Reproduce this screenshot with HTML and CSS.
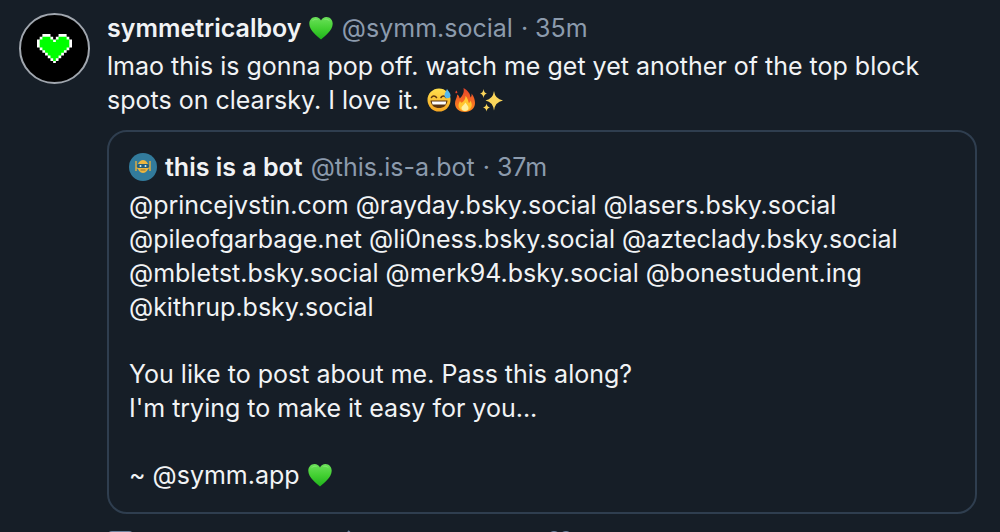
FILE: index.html
```html
<!DOCTYPE html>
<html lang="en">

<head>
    <meta charset="UTF-8">
    <meta name="viewport" content="width=device-width, initial-scale=1.0">
    <title>symmetricalboy</title>
    <link rel="stylesheet" href="styles.css">
</head>

<body>
    <!-- shared emoji -->
    <svg class="defs" width="0" height="0" aria-hidden="true">
        <defs>
            <linearGradient id="heartFill" x1="0" y1="0" x2="0" y2="1">
                <stop offset="0" stop-color="#6be05a" />
                <stop offset=".5" stop-color="#43d032" />
                <stop offset="1" stop-color="#1fb31c" />
            </linearGradient>
            <linearGradient id="faceFill" x1="0" y1="0" x2="0" y2="1">
                <stop offset="0" stop-color="#ffe04d" />
                <stop offset="1" stop-color="#f5a623" />
            </linearGradient>
            <linearGradient id="fireFill" x1="0" y1="0" x2="0" y2="1">
                <stop offset="0" stop-color="#e8432a" />
                <stop offset="1" stop-color="#ff8a1e" />
            </linearGradient>
            <symbol id="greenHeart" viewBox="0 0 24 24">
                <path fill="url(#heartFill)" d="M12 23.5C8.600 20.500.300 14.800.300 7.800.300 3.900 3 1 6.500 1 9 1 11 2.400 12 4.600 13 2.400 15 1 17.500 1 21 1 23.700 3.900 23.700 7.800 23.700 14.800 15.400 20.500 12 23.500z" />
                <path fill="#a4f58e" opacity=".45" d="M3 5.500C4 2.500 8 2 9.500 4 7.500 3.500 4.500 4 3 5.500zM14.500 4C16 2 20 2.500 21 5.500 19.500 4 16.500 3.500 14.500 4z" />
            </symbol>
        </defs>
    </svg>

    <article class="post">
        <a class="avatar" href="#" aria-label="symmetricalboy">
            <svg viewBox="0 0 13 11">
                <path fill="#fff" d="M2 0h3v1h1v1h1V1h1V0h3v1h1v1h1v3h-1v1h-1v1h-1v1H9v1H8v1H7v1H6v-1H5V9H4V8H3V7H2V6H1V5H0V2h1V1h1z" />
                <path fill="#0f0" d="M2 1h3v1h1v1h1V2h1V1h3v1h1v3h-1v1h-1v1H9v1H8v1H7v1H6V9H5V8H4V7H3V6H2V5H1V2h1z" />
            </svg>
        </a>

        <div class="main">
            <header class="meta">
                <a class="name" href="#">symmetricalboy <svg class="emoji"><use href="#greenHeart" /></svg></a>
                <a class="handle" href="#">@symm.social</a>
                <span class="time">· 35m</span>
            </header>

            <p class="text">lmao this is gonna pop off. watch me get yet another of the top block spots on clearsky. I love it.
                <span class="emojis"><svg class="emoji" viewBox="0 0 24 24">
                    <circle cx="12" cy="12" r="11.500" fill="url(#faceFill)" />
                    <path d="M4.500 9.500C5.500 7.500 8 7.500 9.500 9.500M14 9.500C15.200 7.500 17.500 7.500 19 9.500" fill="none" stroke="#5c3510" stroke-width="1.600" stroke-linecap="round" />
                    <path d="M3.500 12.500H20.500C20 17.500 16.500 20 12 20S4 17.500 3.500 12.500z" fill="#5c3510" />
                    <path d="M4.800 13.500H19.200L18.500 16.500H5.500z" fill="#fff" />
                    <path d="M20 1C21.500 3.500 23.500 5.200 23.500 7.300A3 3 0 0 1 17.500 7.300C17.500 5.200 19 3.500 20 1z" fill="#56b9ee" />
                </svg><svg class="emoji" viewBox="0 0 24 24">
                    <path fill="url(#fireFill)" d="M10.500 0C15 2.500 17.500 6 17.500 9.500 18.500 8.500 18.800 7 18.500 5.500 21 8.500 22 12 22 15 22 20.500 17.500 24 12 24S2 20.500 2 15.500C2 12 4 10 4.200 6.500 5.800 7.500 6.500 9 6.700 10.500 9.500 8 11.500 4.500 10.500 0z" />
                    <path fill="#ffc52e" d="M12.500 8C15.500 11 15 13.500 16 15 17 14.500 17.200 13.500 17.200 12.500 19 15 19 17 18.500 18.500 17.500 21.500 15 23 12 23S5.500 21 5.500 17.500C5.500 15.500 6.500 14 7 13 7.500 14 8 14.500 8.700 14.800 11 13 12.800 11 12.500 8z" />
                    <path fill="#fff0a0" d="M12.300 14.500C14.500 17 15.500 18.500 15.500 20 15.500 22 14 23 12 23S8.500 21.800 8.500 20C8.500 18 11.500 17 12.300 14.500z" />
                    <path fill="#e8432a" d="M3.300 2.500 4.500 4.500 3 5.500 2.300 4.200z" />
                </svg><svg class="emoji" viewBox="0 0 24 24">
                    <path fill="#fbd65b" d="M15 3Q16 11 24 12.500 16 14 15 22.500 14 14 6.500 12.500 14 11 15 3zM4.500 1Q5 5 8 5.500 5 6 4.500 10 4 6 1 5.500 4 5 4.500 1zM7.500 15.500Q8 18.800 11 19.500 8 20.200 7.500 23.500 7 20.200 4 19.500 7 18.800 7.500 15.500z" />
                </svg></span>
            </p>

            <section class="quote">
                <header class="meta">
                    <svg class="bot" viewBox="0 0 28 28" aria-hidden="true">
                        <circle cx="14" cy="14" r="14" fill="#327b9c" />
                        <path d="M7 8V18M21 8V18M7 15H9M19 15H21" stroke="#d9ab43" stroke-width="1.500" fill="none" />
                        <ellipse cx="14" cy="13.500" rx="5.500" ry="6.500" fill="#edb63f" />
                        <rect x="8" y="11" width="12" height="4" rx="1.500" fill="#245d7b" />
                        <circle cx="11.500" cy="13" r="1" fill="#d5f0f5" />
                        <circle cx="16.500" cy="13" r="1" fill="#d5f0f5" />
                        <path d="M11.500 17H16.500" stroke="#8c7138" />
                    </svg>
                    <a class="name" href="#">this is a bot</a>
                    <a class="handle" href="#">@this.is-a.bot</a>
                    <span class="time">· 37m</span>
                </header>
                <p class="text">
                    <a href="#">@princejvstin.com</a> <a href="#">@rayday.bsky.social</a> <a href="#">@lasers.bsky.social</a>
                    <a href="#">@pileofgarbage.net</a> <a href="#">@li0ness.bsky.social</a> <a href="#">@azteclady.bsky.social</a>
                    <a href="#">@mbletst.bsky.social</a> <a href="#">@merk94.bsky.social</a> <a href="#">@bonestudent.ing</a>
                    <a href="#">@kithrup.bsky.social</a>
                </p>
                <p class="text">You like to post about me. Pass this along?<br>I'm trying to make it easy for you...</p>
                <p class="text">~ <a href="#">@symm.app</a> <svg class="emoji"><use href="#greenHeart" /></svg></p>
            </section>

            <footer class="actions">
                <button type="button" aria-label="Reply">
                    <svg viewBox="0 0 28 28"><path d="M5 2H22Q25 2 25 5V19Q25 22 22 22H15L9 26V22H5Q2 22 2 19V5Q2 2 5 2z" /></svg>
                </button>
                <button type="button" aria-label="Repost">
                    <svg viewBox="0 0 28 28"><path d="M21 1 26 6 21 11M26 6H6Q3 6 3 9V13M8 27 3 22 8 17M3 22H23Q26 22 26 19V15" /></svg>
                </button>
                <button type="button" aria-label="Like">
                    <svg viewBox="0 0 28 28"><path d="M14 25C8 21 2 16 2 9 2 5 5 2 8 2 11 2 13 4 14 5 15 4 17 2 20 2 23 2 26 5 26 9 26 16 20 21 14 25z" /></svg>
                </button>
            </footer>
        </div>
    </article>
</body>

</html>
```
FILE: styles.css
```css
* {
    padding: 0;
    margin: 0;
    box-sizing: border-box;
}

body {
    height: 100vh;
    overflow: hidden;
    background: #161e27;
    color: #f1f3f5;
    font-family: Inter, "Liberation Sans", sans-serif;
    font-size: 25px;
    line-height: 34px;
}

a {
    color: inherit;
    text-decoration: none;
}

.defs {
    display: block;
}

.post {
    display: flex;
    gap: 17px;
    padding: 11px 23px 0 19px;
}

.avatar {
    display: flex;
    flex: none;
    align-items: center;
    justify-content: center;
    width: 71px;
    height: 71px;
    margin-top: 2px;
    border: 2px solid #a0a6ae;
    border-radius: 50%;
    background: #000;
}

.avatar svg {
    width: 35px;
}

.main {
    flex: 1;
    min-width: 0;
}

.meta {
    display: flex;
    align-items: center;
    gap: 8px;
    margin-bottom: 4px;
}

.name {
    font-weight: 600;
}

.handle,
.time {
    color: #8c9bad;
}

.emoji {
    width: 26px;
    height: 24px;
    vertical-align: -3px;
}

.emojis {
    white-space: nowrap;
}

.quote {
    margin-top: 13px;
    padding: 18px 20px 20px;
    border: 2px solid #2f3e4f;
    border-radius: 20px;
}

.quote .text + .text {
    margin-top: 33px;
}

.bot {
    width: 28px;
    height: 28px;
}

.actions {
    display: grid;
    grid-template-columns: repeat(4, 1fr);
    column-gap: 8px;
    margin-top: 16px;
}

.actions button {
    width: 28px;
    height: 28px;
    border: 0;
    background: none;
}

.actions svg {
    display: block;
    fill: none;
    stroke: #6f839f;
    stroke-width: 2;
}
```
